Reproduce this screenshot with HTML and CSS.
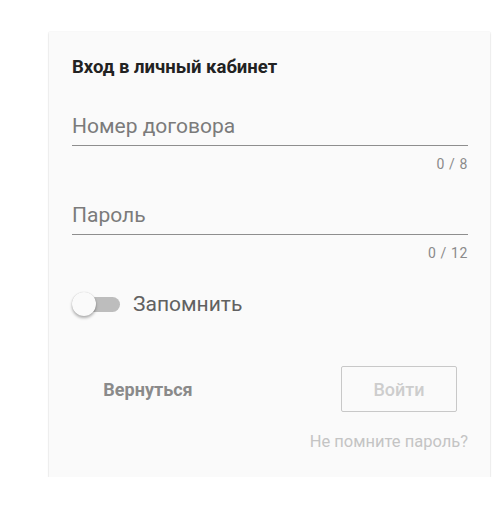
FILE: index.html
```html
<!DOCTYPE html>
<html lang="ru">
<head>
<meta charset="utf-8">
<link rel="stylesheet" href="styles.css">
</head>
<body>
<div class="page">
  <div class="card">
    <div class="title">Вход в личный кабинет</div>
    <div class="field first">
      <div class="input">Номер договора</div>
      <div class="counter">0 / 8</div>
    </div>
    <div class="field second">
      <div class="input">Пароль</div>
      <div class="counter">0 / 12</div>
    </div>
    <div class="toggle-row">
      <div class="switch"><span class="track"></span><span class="thumb"></span></div>
      <span class="toggle-label">Запомнить</span>
    </div>
    <div class="actions">
      <div class="btn btn-back">Вернуться</div>
      <div class="btn btn-login">Войти</div>
    </div>
    <div class="forgot">Не помните пароль?</div>
  </div>
</div>
</body>
</html>
```

FILE: styles.css
```css
html, body {
  margin: 0;
  padding: 0;
  background: #ffffff;
  font-family: Roboto, "Noto Sans", sans-serif;
}
.page {
  padding: 32px 10px 0 49px;
}
.card {
  width: 441px;
  box-sizing: border-box;
  background: #fafafa;
  padding: 24px 22px 26px 23px;
  box-shadow: 0 1px 0 rgba(0,0,0,0.4), 0 1px 2px rgba(0,0,0,0.15), 0 0 1px rgba(0,0,0,0.12);
}
.title {
  font-size: 18.5px;
  line-height: 22px;
  font-weight: 700;
  color: #222;
}
.field.first { margin-top: 34px; }
.field.second { margin-top: 29px; }
.input {
  font-size: 21px;
  line-height: 28px;
  color: #7b7b7b;
  padding-bottom: 5px;
  border-bottom: 1px solid #8e8e8e;
}
.counter {
  margin-top: 10px;
  font-size: 14px;
  line-height: 16px;
  color: #8a8a8a;
  text-align: right;
  letter-spacing: 0.6px;
}
.toggle-row {
  margin-top: 23px;
  height: 40px;
  display: flex;
  align-items: center;
}
.switch {
  position: relative;
  width: 49px;
  height: 24px;
}
.track {
  position: absolute;
  left: 4px;
  top: 5px;
  width: 44px;
  height: 15px;
  border-radius: 8px;
  background: #bdbdbd;
}
.thumb {
  position: absolute;
  left: 0;
  top: 0;
  width: 24px;
  height: 24px;
  border-radius: 50%;
  background: #fafafa;
  box-shadow: 0 2px 3px rgba(0,0,0,0.3), 0 0 1px rgba(0,0,0,0.2);
}
.toggle-label {
  margin-left: 12px;
  font-size: 21px;
  color: #616161;
}
.actions {
  margin-top: 42px;
  display: flex;
  justify-content: space-between;
  align-items: center;
  padding: 0 11px 0 18px;
}
.btn {
  width: 116px;
  height: 46px;
  box-sizing: border-box;
  display: flex;
  align-items: center;
  justify-content: center;
  font-size: 18px;
  font-weight: 700;
}
.btn-back {
  color: #8a8a8a;
}
.btn-login {
  color: #cdcdcd;
  border: 1px solid #c8c8c8;
  border-radius: 2px;
  font-weight: 500;
}
.forgot {
  margin-top: 21px;
  text-align: right;
  font-size: 16.5px;
  line-height: 18px;
  color: #c4c4c4;
}
```
